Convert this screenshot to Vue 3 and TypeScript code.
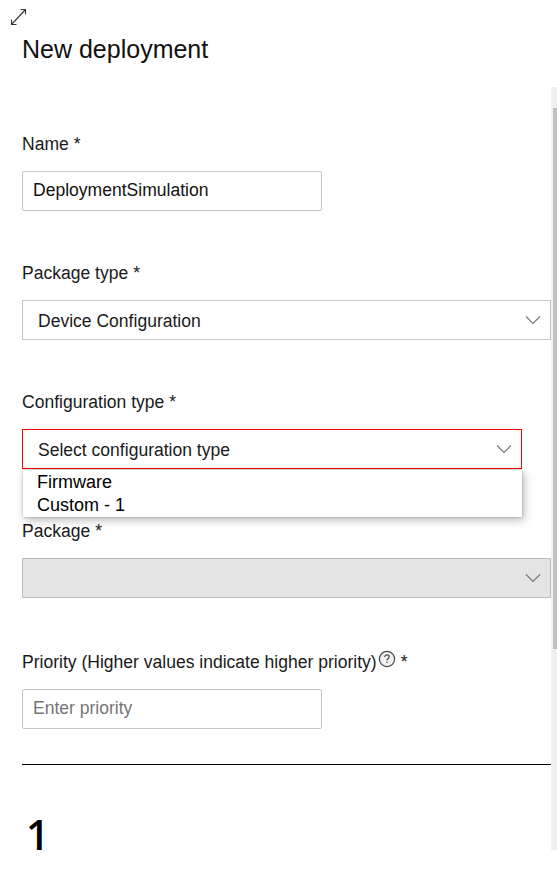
<script setup lang="ts">
import { ref } from 'vue'

const name = ref<string>('DeploymentSimulation')
const priority = ref<string>('')
const configurationTypes: string[] = ['Firmware', 'Custom - 1']
const deviceCount = 1
</script>

<template>
  <main class="flyout">
    <header class="header">
      <svg class="expand" width="18" height="18" viewBox="0 0 18 18">
        <path d="M1.5 16.5 15.5 1.5M10.5 1.5h5V6.5M1.5 11.5v5H6.5" />
      </svg>
      <h1 class="title">New deployment</h1>
    </header>

    <div class="body">
      <form class="form">
        <div class="field">
          <label class="label"><span>Name</span> <span class="star">*</span></label>
          <input v-model="name" class="input" type="text" />
        </div>

        <div class="field">
          <label class="label"><span>Package type</span> <span class="star">*</span></label>
          <div class="select">
            <span>Device Configuration</span>
            <svg class="chevron" width="16" height="10" viewBox="0 0 16 10"><path d="M1 1.5 8 8.5 15 1.5" /></svg>
          </div>
        </div>

        <div class="field">
          <label class="label"><span>Configuration type</span> <span class="star">*</span></label>
          <div class="select invalid">
            <span>Select configuration type</span>
            <svg class="chevron" width="16" height="10" viewBox="0 0 16 10"><path d="M1 1.5 8 8.5 15 1.5" /></svg>
            <ul class="menu">
              <li v-for="type in configurationTypes" :key="type">{{ type }}</li>
            </ul>
          </div>
        </div>

        <div class="field last-select">
          <label class="label"><span>Package</span> <span class="star">*</span></label>
          <div class="select disabled">
            <span></span>
            <svg class="chevron" width="16" height="10" viewBox="0 0 16 10"><path d="M1 1.5 8 8.5 15 1.5" /></svg>
          </div>
        </div>

        <div class="field priority">
          <label class="label">
            <span>Priority (Higher values indicate higher priority)</span>
            <svg class="help" width="18" height="18" viewBox="0 0 18 18">
              <circle cx="9" cy="9" r="7.6" />
              <path d="M6.8 7.1C6.8 5.6 7.7 4.8 9 4.8s2.2.8 2.2 2c0 1.7-2.2 1.8-2.2 3.7M9 11.8v1.3" />
            </svg>
            <span class="star">*</span>
          </label>
          <input v-model="priority" class="input" type="text" placeholder="Enter priority" />
        </div>
      </form>

      <section class="summary">
        <span class="count">{{ deviceCount }}</span>
      </section>

      <div class="scrollbar"><div class="thumb"></div></div>
    </div>
  </main>
</template>

<style>
body {
  background: #fff;
}
</style>

<style scoped>
.flyout {
  width: 557px;
  height: 871px;
  overflow: hidden;
  background: #fff;
  color: #1a1a1a;
  font-family: "Liberation Sans", Arial, sans-serif;
  font-size: 17.55px;
  line-height: 21px;
}
.header {
  height: 87px;
  box-sizing: border-box;
  padding: 8px 0 0 10px;
}
.expand {
  display: block;
}
.expand path,
.chevron path {
  fill: none;
  stroke: #333;
  stroke-width: 1.1;
}
.title {
  margin: 8px 0 0 12px;
  font-size: 25px;
  line-height: 30px;
  font-weight: 400;
  color: #111;
}
.body {
  position: relative;
  height: 763px;
  box-sizing: border-box;
  padding: 47px 6px 0 22px;
}
.field {
  height: 129px;
}
.last-select {
  height: 131px;
}
.priority {
  height: 112px;
}
.label {
  display: flex;
  height: 37px;
  gap: 5px;
  white-space: nowrap;
}
.help {
  margin: -2px 0 0 -4px;
  fill: #f1f1f1;
  stroke: #444;
  stroke-width: 1.2;
}
.help path {
  fill: none;
}
.input {
  display: block;
  box-sizing: border-box;
  width: 300px;
  height: 40px;
  padding: 0 10px 2px;
  border: 1px solid #c4c4c4;
  border-radius: 2px;
  outline: none;
  background: #fff;
  color: #111;
  font: inherit;
}
.input::placeholder {
  color: #757575;
  opacity: 1;
}
.select {
  position: relative;
  display: flex;
  box-sizing: border-box;
  height: 40px;
  align-items: center;
  justify-content: space-between;
  padding: 2px 9px 0 15px;
  border: 1px solid #c4c4c4;
}
.chevron {
  margin-top: -3px;
}
.chevron path {
  stroke: #777;
}
.invalid {
  width: 500px;
  border-color: #f80000;
}
.disabled {
  background: #e4e4e4;
  border-color: #bdbdbd;
}
.menu {
  position: absolute;
  z-index: 1;
  top: 40px;
  left: 0;
  width: 499px;
  height: 47px;
  margin: 0;
  padding: 1px 0 0 14px;
  box-sizing: border-box;
  list-style: none;
  background: #fff;
  color: #000;
  font-size: 18px;
  line-height: 23px;
  box-shadow: 0 0 2px rgba(0, 0, 0, 0.3), 2px 3px 9px rgba(0, 0, 0, 0.28);
}
.summary {
  padding-top: 49px;
  border-top: 1px solid #000;
}
.count {
  display: block;
  padding-left: 4px;
  font-family: "Open Sans", sans-serif;
  font-size: 41px;
  line-height: 40px;
  font-weight: 600;
  color: #000;
}
.scrollbar {
  position: absolute;
  top: 0;
  right: 0;
  width: 6px;
  height: 763px;
  padding: 21px 0 0 2px;
  box-sizing: border-box;
  background: #f0f0f0;
}
.thumb {
  height: 541px;
  background: #c1c1c1;
}
</style>
